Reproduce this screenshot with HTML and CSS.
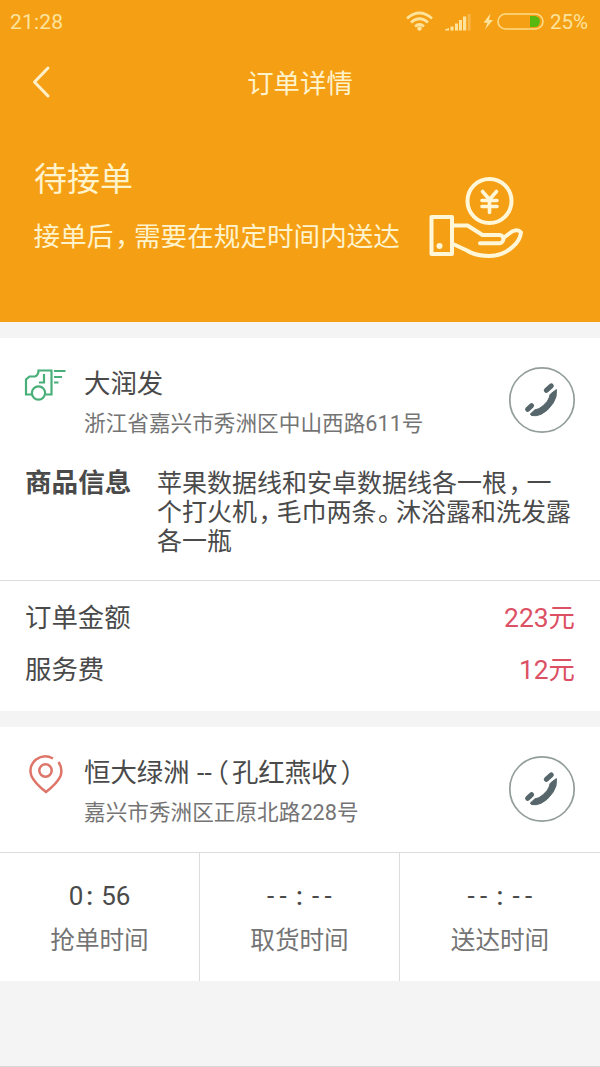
FILE: index.html
```html
<!DOCTYPE html>
<html lang="zh-CN">
<head>
<meta charset="utf-8">
<title>订单详情</title>
<link rel="stylesheet" href="styles.css">
</head>
<body>
<header class="hero">
  <div class="status">
    <span class="clock">21:28</span>
    <svg class="status-icons" width="140" height="24" viewBox="0 0 140 24">
      <g fill="none" stroke="#fde39b" stroke-width="2.700">
        <path d="M2 8.500Q14.500-2.500 27 8.500M6 12.500Q14.500 5 23 12.500M10 16.500Q14.500 12.500 19 16.500"/>
      </g>
      <circle cx="14.500" cy="18.500" r="2.200" fill="#fde39b"/>
      <path fill="#fde39b" d="M40 20.500v-1l4-1.500v2.500zM45.500 16.500h3v4h-3zM50 13.500h3v7h-3zM54 10h3v10.500h-3zM58 6.500h3.200v14H58z"/>
      <path fill="#f8b74a" d="M62.800 4h2.700v16.500h-2.700z"/>
      <path fill="#fde39b" d="M85.500 3.500l-7 9.200h4L80 19.500l8-9.500h-4z"/>
      <rect x="93" y="4" width="45" height="15" rx="7.500" fill="none" stroke="#fddb87" stroke-width="1.600"/>
      <path fill="#58b80f" d="M125 6h4.500a5.500 5.500 0 0 1 0 11H125z"/>
    </svg>
    <span class="percent">25%</span>
  </div>
  <div class="nav">
    <svg class="back" width="20" height="34" viewBox="0 0 20 34"><path d="M17 3L3.500 17 17 31" fill="none" stroke="#fff0cc" stroke-width="3" stroke-linecap="round" stroke-linejoin="round"/></svg>
    <h1 class="nav-title">订单详情</h1>
  </div>
  <div class="state">
    <div class="state-text">
      <div class="state-name">待接单</div>
      <div class="state-note">接单后<span class="p">，</span>需要在规定时间内送达</div>
    </div>
    <svg class="hand" width="96" height="84" viewBox="0 0 96 84" fill="none" stroke="#fff7d8" stroke-width="4" stroke-linejoin="round" stroke-linecap="round">
      <circle cx="61.500" cy="26" r="22"/>
      <path stroke-width="3.600" d="M54.500 16.500l7 8 7-8M61.500 24.500v13M54 25.500h15M54 31.500h15"/>
      <rect x="3.500" y="42" width="20.500" height="37"/>
      <circle cx="11.500" cy="71" r="3" fill="#fff7d8" stroke="none"/>
      <path d="M25 50.500h14.500l15 9.500h17a4 4 0 0 1 3 6.500 4 4 0 0 1-3 1.800H52M76 62.500l8-6q6-3 9 1-1 8-8 14-10 9.500-24 9.500-14 0-22-5.500L25 69"/>
    </svg>
  </div>
</header>

<main>
  <section class="card">
    <div class="place shop">
      <svg class="place-icon" width="44" height="36" viewBox="0 0 44 36" fill="none" stroke="#48af78" stroke-width="2.200">
        <path d="M9 27.500H2V12.500l3.500-3h5.500q3.500-1.500 3.500-6h13v24h-5.500M20 7v8.500h-5M30 4h11.500M30 10h8M30 15.500h4.500"/>
        <circle cx="14.500" cy="26" r="6.600"/>
      </svg>
      <div class="place-text">
        <div class="place-name">大润发</div>
        <div class="place-address">浙江省嘉兴市秀洲区中山西路611号</div>
      </div>
      <svg class="call" width="68" height="68" viewBox="0 0 68 68">
        <circle cx="34" cy="34" r="32.200" fill="#fff" stroke="#939d9b" stroke-width="1.700"/>
        <path fill="#56666a" stroke="#56666a" stroke-width="1" stroke-linejoin="round" d="M48.400 23.600Q49.300 31 45 37.300 39.500 45.500 33 48.300 28 50.500 23.500 49.500L22.300 48 27 43.800Q31 43.500 35 39.800 40.500 35 41.500 31 41.500 28.500 43.300 27.300Z"/>
        <path fill="none" stroke="#56666a" stroke-width="5" stroke-linecap="round" d="M38.300 24.300l5-4.500M19.600 43.300l4-3.600"/>
      </svg>
    </div>
    <div class="goods">
      <h2 class="goods-title">商品信息</h2>
      <p class="goods-text">苹果数据线和安卓数据线各一根<span class="p">，</span>一<br>个打火机<span class="p">，</span>毛巾两条<span class="p">。</span>沐浴露和洗发露<br>各一瓶</p>
    </div>
    <div class="fees">
      <div class="fee"><span>订单金额</span><span class="amount">223元</span></div>
      <div class="fee"><span>服务费</span><span class="amount">12元</span></div>
    </div>
  </section>

  <section class="card">
    <div class="place customer">
      <svg class="place-icon" width="44" height="42" viewBox="0 0 44 42" fill="none" stroke="#de7568" stroke-width="2.500">
        <path d="M29 5.500Q20 .5 12 6.500 4 13.500 7.500 23q3 7 14.500 16Q33.500 30 36.500 23q2.500-7.500-2-14"/>
        <circle cx="21.500" cy="17.500" r="6.200"/>
      </svg>
      <div class="place-text">
        <div class="place-name">恒大绿洲 <span class="dash">--</span><span class="open">（</span>孔红燕收<span class="close">）</span></div>
        <div class="place-address">嘉兴市秀洲区正原北路228号</div>
      </div>
      <svg class="call" width="68" height="68" viewBox="0 0 68 68">
        <circle cx="34" cy="34" r="32.200" fill="#fff" stroke="#939d9b" stroke-width="1.700"/>
        <path fill="#56666a" stroke="#56666a" stroke-width="1" stroke-linejoin="round" d="M48.400 23.600Q49.300 31 45 37.300 39.500 45.500 33 48.300 28 50.500 23.500 49.500L22.300 48 27 43.800Q31 43.500 35 39.800 40.500 35 41.500 31 41.500 28.500 43.300 27.300Z"/>
        <path fill="none" stroke="#56666a" stroke-width="5" stroke-linecap="round" d="M38.300 24.300l5-4.500M19.600 43.300l4-3.600"/>
      </svg>
    </div>
    <div class="times">
      <div class="time"><div class="time-value">0<span class="colon">:</span>56</div><div class="time-label">抢单时间</div></div>
      <div class="time"><div class="time-value blank">--<span>:</span>--</div><div class="time-label">取货时间</div></div>
      <div class="time"><div class="time-value blank">--<span>:</span>--</div><div class="time-label">送达时间</div></div>
    </div>
  </section>
</main>
</body>
</html>
```

FILE: styles.css
```css
* { box-sizing: border-box; }
body {
  margin: 0;
  height: 1067px;
  background: #f4f4f4;
  border-bottom: 1px solid #d8d8d8;
  color: #4a4a4a;
  font-family: Roboto, "Noto Sans CJK SC", sans-serif;
  font-weight: 400;
  overflow: hidden;
}
h1, h2, p { margin: 0; }

.hero { height: 322px; background: #f59f15; color: #fff3cc; }
.status { display: flex; align-items: center; height: 44px; padding: 0 10px; color: #fde39b; font-size: 21px; }
.clock { flex: 1; letter-spacing: 0.2px; }
.status-icons { margin-right: 5px; }
.percent { width: 40px; font-size: 20.5px; line-height: 24px; padding-bottom: 1px; white-space: nowrap; }
.nav { display: grid; grid-template-columns: 60px 1fr 60px; align-items: center; height: 76px; }
.back { margin-left: 31px; }
.nav-title { font-size: 26.4px; line-height: 40px; padding-top: 3px; font-weight: 400; text-align: center; }
.state { display: flex; padding: 36px 0 0 34px; }
.state-text { width: 394px; }
.state-name { font-size: 33px; line-height: 48px; }
.state-note { font-size: 26.6px; line-height: 40px; margin-top: 13px; margin-left: -0.5px; white-space: nowrap; }
.hand { margin-top: 19px; }
.p { font-feature-settings: "halt"; margin: 0 0.22em 0 0.06em; }

.card { margin-top: 16px; background: #fff; }
.place { display: flex; padding: 0 24px 0 24px; }
.shop { height: 122px; padding-top: 28px; }
.customer { height: 126px; padding-top: 28px; border-bottom: 1px solid #dcdcdc; }
.place-icon { flex: none; width: 44px; margin-right: 16px; }
.shop .place-icon { margin-top: 1px; }
.customer .place-icon { margin-top: -2px; }
.place-text { flex: 1; white-space: nowrap; }
.place-name { font-size: 26.4px; line-height: 34px; padding-top: 1px; }
.place-address { font-size: 21.65px; line-height: 30px; margin-top: 8px; color: #747474; }
.call { flex: none; }
.dash { margin-left: 1px; }
.open { font-feature-settings: "halt"; margin: 0 3px 0 4px; }
.close { font-feature-settings: "halt"; margin-left: 3px; }

.goods { display: flex; height: 120px; padding: 6px 25px 0; }
.goods-title { width: 132px; font-size: 26.6px; line-height: 34px; font-weight: 700; }
.goods-text { font-size: 25px; line-height: 29px; padding-top: 3px; white-space: nowrap; }
.fees { height: 131px; padding: 11px 25px 0; border-top: 1px solid #dcdcdc; }
.fee { display: flex; justify-content: space-between; font-size: 26.4px; line-height: 52px; }
.amount { color: #dc5064; }

.times { display: grid; grid-template-columns: 200px 200px 200px; height: 128px; }
.time { padding-top: 25px; text-align: center; border-right: 1px solid #dcdcdc; }
.time:last-child { border-right: 0; }
.time-value { font-size: 26px; line-height: 36px; }
.colon { margin: 0 8px 0 3px; font-weight: 500; }
.blank { letter-spacing: 5.3px; padding-left: 5px; }
.blank span { margin: 0 4px; font-weight: 500; }
.time-label { font-size: 24.6px; line-height: 36px; margin-top: 9px; color: #747474; }
```
